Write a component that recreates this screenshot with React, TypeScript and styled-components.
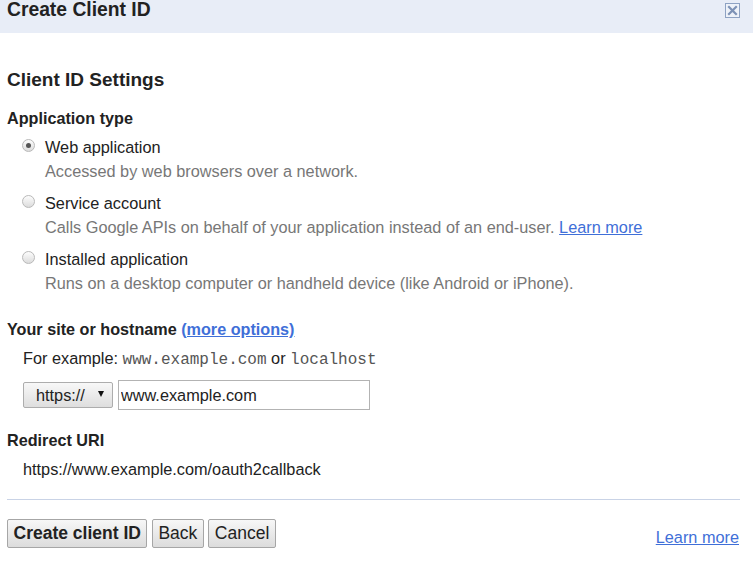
import React from "react";
import styled, { createGlobalStyle } from "styled-components";

const Global = createGlobalStyle`
  html, body { margin: 0; padding: 0; background: #fff; }
  body { font-family: "Liberation Sans", Arial, sans-serif; color: #222; }
  * { box-sizing: border-box; }
`;

const Page = styled.div`
  width: 753px;
  height: 563px;
  overflow: hidden;
  background: #fff;
`;

const Header = styled.div`
  height: 33px;
  background: #e8edf7;
  display: flex;
  justify-content: space-between;
  align-items: flex-start;
  padding: 0 13px 0 7px;
`;

const Title = styled.h1`
  margin: 0;
  font-size: 19.3px;
  line-height: 20px;
  font-weight: bold;
  color: #222;
`;

const CloseBtn = styled.button`
  margin-top: 3px;
  width: 15px;
  height: 15px;
  padding: 0;
  border: 1px solid #8ea2c3;
  background: #eef2f9;
  display: flex;
  align-items: center;
  justify-content: center;
  cursor: pointer;
`;

const Body = styled.div`
  padding: 0 13px 0 7px;
  display: flex;
  flex-direction: column;
`;

const SectionTitle = styled.h2`
  margin: 36px 0 0;
  font-size: 19px;
  line-height: 22px;
  font-weight: bold;
  color: #222;
`;

const FieldLabel = styled.div<{ $mt: number }>`
  margin-top: ${(p) => p.$mt}px;
  font-size: 16.2px;
  line-height: 20px;
  font-weight: bold;
  color: #222;
`;

const Options = styled.div`
  margin-top: 9px;
  padding-left: 15px;
  display: flex;
  flex-direction: column;
  gap: 12px;
`;

const Option = styled.label`
  display: grid;
  grid-template-columns: 13px 1fr;
  column-gap: 10px;
  row-gap: 4px;
`;

const Radio = styled.span<{ $checked?: boolean }>`
  margin-top: 2px;
  width: 13px;
  height: 13px;
  border-radius: 50%;
  border: 1px solid #b9b9b9;
  background: linear-gradient(#fdfdfd, #dcdcdc);
  display: flex;
  align-items: center;
  justify-content: center;
  &::after {
    content: "";
    width: 5px;
    height: 5px;
    border-radius: 50%;
    background: ${(p) => (p.$checked ? "#555" : "transparent")};
  }
`;

const OptionTitle = styled.span`
  font-size: 16.3px;
  line-height: 20px;
  color: #222;
`;

const OptionDesc = styled.span`
  grid-column: 2;
  font-size: 16.3px;
  line-height: 20px;
  color: #777;
`;

const Link = styled.a`
  color: #3f6fd8;
  text-decoration: underline;
  cursor: pointer;
`;

const Indented = styled.div<{ $mt: number }>`
  margin-top: ${(p) => p.$mt}px;
  padding-left: 16px;
  font-size: 16.3px;
  line-height: 20px;
  color: #222;
`;

const Mono = styled.span`
  font-family: "Liberation Mono", "Courier New", monospace;
  font-size: 16px;
  color: #555;
`;

const InputRow = styled.div`
  margin-top: 10px;
  padding-left: 16px;
  display: flex;
  align-items: center;
  gap: 5px;
`;

const SelectBox = styled.div`
  width: 90px;
  height: 26px;
  border: 1px solid #adadad;
  border-radius: 2px;
  background: linear-gradient(#f8f8f8, #dedede);
  display: flex;
  align-items: center;
  justify-content: space-between;
  padding: 0 8px 0 12px;
  font-size: 16.3px;
  color: #222;
`;

const Arrow = styled.span`
  width: 0;
  height: 0;
  border-left: 3px solid transparent;
  border-right: 3px solid transparent;
  border-top: 6px solid #111;
  margin-top: -2px;
`;

const TextInput = styled.input`
  width: 252px;
  height: 30px;
  border: 1px solid #b3b3b3;
  padding: 0 2px;
  font-family: "Liberation Sans", Arial, sans-serif;
  font-size: 16.3px;
  color: #222;
  outline: none;
`;

const Divider = styled.hr`
  margin: 20px 0 0;
  border: none;
  height: 1px;
  background: #c9d3e6;
`;

const Footer = styled.div`
  margin-top: 19px;
  display: flex;
  justify-content: space-between;
  align-items: flex-end;
`;

const Buttons = styled.div`
  display: flex;
  gap: 4.5px;
`;

const Button = styled.button<{ $primary?: boolean }>`
  height: 29px;
  padding: 0 5.5px;
  border: 1px solid #a6a6a6;
  border-radius: 2px;
  background: linear-gradient(#f7f7f7, #dcdcdc);
  font-family: "Liberation Sans", Arial, sans-serif;
  font-size: 17.5px;
  font-weight: ${(p) => (p.$primary ? "bold" : "normal")};
  color: #222;
  cursor: pointer;
`;

const FooterLink = styled(Link)`
  font-size: 16.3px;
  line-height: 20px;
  margin-right: 1px;
  margin-bottom: 1px;
`;

export default function App() {
  return (
    <Page>
      <Global />
      <Header>
        <Title>Create Client ID</Title>
        <CloseBtn aria-label="Close">
          <svg width="11" height="11" viewBox="0 0 11 11">
            <path d="M2 2 L9 9 M9 2 L2 9" stroke="#7d92b6" strokeWidth="2.2" strokeLinecap="square" />
          </svg>
        </CloseBtn>
      </Header>
      <Body>
        <SectionTitle>Client ID Settings</SectionTitle>
        <FieldLabel $mt={17}>Application type</FieldLabel>
        <Options>
          <Option>
            <Radio $checked />
            <OptionTitle>Web application</OptionTitle>
            <OptionDesc>Accessed by web browsers over a network.</OptionDesc>
          </Option>
          <Option>
            <Radio />
            <OptionTitle>Service account</OptionTitle>
            <OptionDesc>
              Calls Google APIs on behalf of your application instead of an end-user.{" "}
              <Link>Learn more</Link>
            </OptionDesc>
          </Option>
          <Option>
            <Radio />
            <OptionTitle>Installed application</OptionTitle>
            <OptionDesc>
              Runs on a desktop computer or handheld device (like Android or iPhone).
            </OptionDesc>
          </Option>
        </Options>
        <FieldLabel $mt={26}>
          Your site or hostname <Link>(more options)</Link>
        </FieldLabel>
        <Indented $mt={9}>
          For example: <Mono>www.example.com</Mono> or <Mono>localhost</Mono>
        </Indented>
        <InputRow>
          <SelectBox>
            <span>https://</span>
            <Arrow />
          </SelectBox>
          <TextInput defaultValue="www.example.com" />
        </InputRow>
        <FieldLabel $mt={20}>Redirect URI</FieldLabel>
        <Indented $mt={9}>https://www.example.com/oauth2callback</Indented>
        <Divider />
        <Footer>
          <Buttons>
            <Button $primary>Create client ID</Button>
            <Button>Back</Button>
            <Button>Cancel</Button>
          </Buttons>
          <FooterLink>Learn more</FooterLink>
        </Footer>
      </Body>
    </Page>
  );
}
